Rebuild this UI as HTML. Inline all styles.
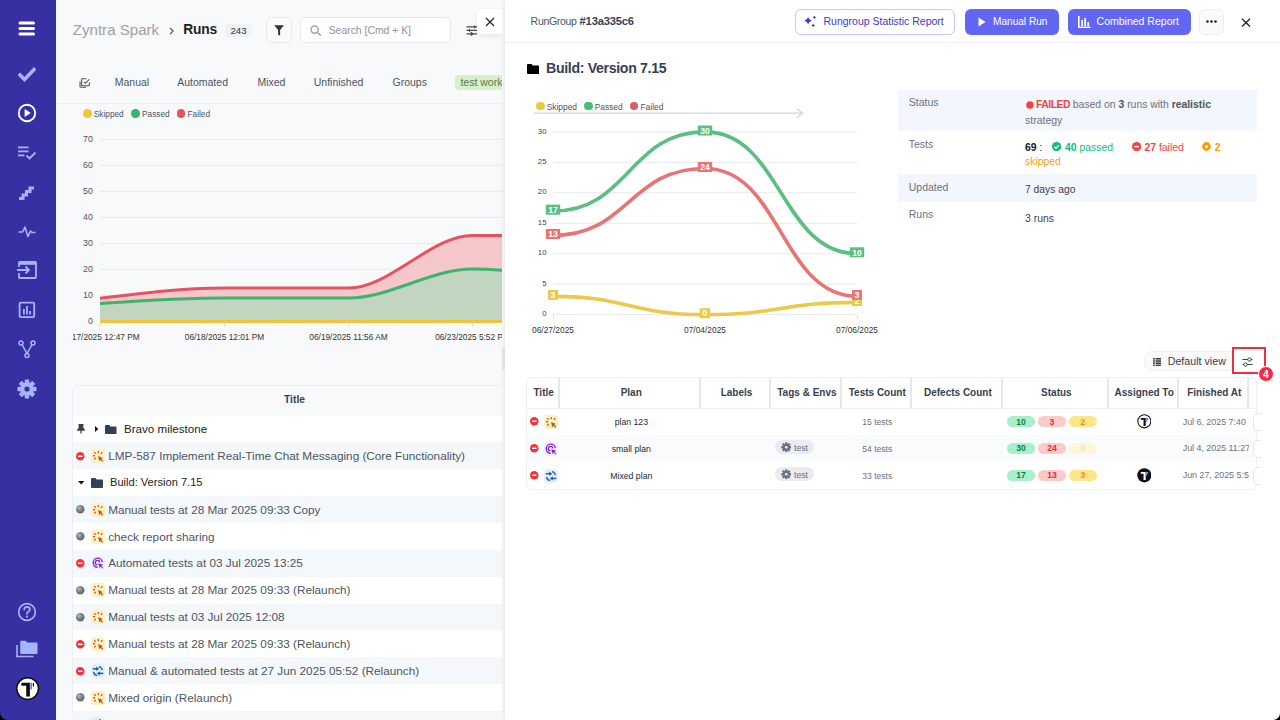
<!DOCTYPE html><html><head><meta charset="utf-8"><style>
html,body{margin:0;padding:0;}
body{width:1280px;height:720px;overflow:hidden;position:relative;background:#000;font-family:"Liberation Sans", sans-serif;}
.abs{position:absolute;}

</style></head><body>
<div style="position:absolute;left:0px;top:0px;width:56px;height:720px;background:#3730a3;border-bottom-left-radius:8px;"></div>
<svg style="position:absolute;left:18px;top:21px;" width="18" height="15" viewBox="0 0 18 15"><rect x="0.5" y="0.5" width="16.5" height="3" rx="1.5" fill="#fff"/><rect x="0.5" y="6" width="16.5" height="3" rx="1.5" fill="#fff"/><rect x="0.5" y="11.5" width="16.5" height="3" rx="1.5" fill="#fff"/></svg>
<svg style="position:absolute;left:18px;top:66px;" width="18" height="16" viewBox="0 0 18 16"><path d="M2 9 L6.5 13.5 L16 3.5" stroke="#a5b4fc" stroke-width="3.6" fill="none" stroke-linecap="square"/></svg>
<svg style="position:absolute;left:17px;top:103px;" width="20" height="20" viewBox="0 0 20 20"><circle cx="10" cy="10" r="8.2" stroke="#fff" stroke-width="1.9" fill="none"/><path d="M7.6 6 L13.8 10 L7.6 14 Z" fill="#fff"/></svg>
<svg style="position:absolute;left:17px;top:145px;" width="20" height="16" viewBox="0 0 20 16"><rect x="1" y="1.5" width="10.5" height="1.8" fill="#a5b4fc"/><rect x="1" y="5.5" width="10.5" height="1.8" fill="#a5b4fc"/><rect x="1" y="9.5" width="6.5" height="1.8" fill="#a5b4fc"/><path d="M9.5 10.5 L12.5 13.5 L18.5 7.5" stroke="#a5b4fc" stroke-width="1.8" fill="none"/></svg>
<svg style="position:absolute;left:17px;top:184px;" width="20" height="17" viewBox="0 0 20 17"><path d="M2 14.5 H6 V11 H9.5 V7.5 H13 V4 H17" stroke="#a5b4fc" stroke-width="3" fill="none" stroke-linejoin="miter"/></svg>
<svg style="position:absolute;left:17px;top:224px;" width="20" height="14" viewBox="0 0 20 14"><path d="M1.5 8 H5.5 L8 3 L11 12.5 L13.5 7 L15 8.5 H18.5" stroke="#a5b4fc" stroke-width="1.6" fill="none" stroke-linejoin="round"/></svg>
<svg style="position:absolute;left:16px;top:260px;" width="22" height="20" viewBox="0 0 22 20"><path d="M3 7 V2.5 Q3 1.8 3.7 1.8 H19.3 Q20 1.8 20 2.5 V17.3 Q20 18 19.3 18 H3.7 Q3 18 3 17.3 V13" stroke="#a5b4fc" stroke-width="1.8" fill="none"/><rect x="3" y="1.8" width="17" height="3" fill="#a5b4fc"/><path d="M1 10 H13 M9.5 6.5 L13 10 L9.5 13.5" stroke="#a5b4fc" stroke-width="1.8" fill="none"/></svg>
<svg style="position:absolute;left:18px;top:301px;" width="18" height="18" viewBox="0 0 18 18"><rect x="1.6" y="1.6" width="14.6" height="14.6" rx="1.2" stroke="#a5b4fc" stroke-width="1.8" fill="none"/><rect x="5" y="8" width="1.8" height="5.5" fill="#a5b4fc"/><rect x="8.1" y="5" width="1.8" height="8.5" fill="#a5b4fc"/><rect x="11.2" y="10" width="1.8" height="3.5" fill="#a5b4fc"/></svg>
<svg style="position:absolute;left:18px;top:340px;" width="18" height="19" viewBox="0 0 18 19"><circle cx="3" cy="3" r="2" stroke="#a5b4fc" stroke-width="1.5" fill="none"/><circle cx="15" cy="3" r="2" stroke="#a5b4fc" stroke-width="1.5" fill="none"/><circle cx="9" cy="15.5" r="2" stroke="#a5b4fc" stroke-width="1.5" fill="none"/><path d="M4 4.7 L9 13.5 L14 4.7" stroke="#a5b4fc" stroke-width="1.5" fill="none"/></svg>
<svg style="position:absolute;left:17px;top:379px;" width="20" height="20" viewBox="0 0 20 20"><rect x="7.8" y="0.5" width="4.4" height="5" rx="0.8" fill="#a5b4fc" transform="rotate(0 10 10)"/><rect x="7.8" y="0.5" width="4.4" height="5" rx="0.8" fill="#a5b4fc" transform="rotate(45 10 10)"/><rect x="7.8" y="0.5" width="4.4" height="5" rx="0.8" fill="#a5b4fc" transform="rotate(90 10 10)"/><rect x="7.8" y="0.5" width="4.4" height="5" rx="0.8" fill="#a5b4fc" transform="rotate(135 10 10)"/><rect x="7.8" y="0.5" width="4.4" height="5" rx="0.8" fill="#a5b4fc" transform="rotate(180 10 10)"/><rect x="7.8" y="0.5" width="4.4" height="5" rx="0.8" fill="#a5b4fc" transform="rotate(225 10 10)"/><rect x="7.8" y="0.5" width="4.4" height="5" rx="0.8" fill="#a5b4fc" transform="rotate(270 10 10)"/><rect x="7.8" y="0.5" width="4.4" height="5" rx="0.8" fill="#a5b4fc" transform="rotate(315 10 10)"/><circle cx="10" cy="10" r="6.8" fill="#a5b4fc"/><circle cx="10" cy="10" r="2.6" fill="#3730a3"/></svg>
<svg style="position:absolute;left:17px;top:602px;" width="20" height="20" viewBox="0 0 20 20"><circle cx="10" cy="10" r="8.3" stroke="#a5b4fc" stroke-width="1.7" fill="none"/><path d="M7.2 7.6 Q7.2 4.9 10 4.9 Q12.8 4.9 12.8 7.4 Q12.8 9 11.2 9.8 Q10 10.4 10 11.8" stroke="#a5b4fc" stroke-width="1.7" fill="none" stroke-linecap="round"/><circle cx="10" cy="14.6" r="1.1" fill="#a5b4fc"/></svg>
<svg style="position:absolute;left:15px;top:639px;" width="24" height="20" viewBox="0 0 24 20"><path d="M2 6 V17.5 H18.5" stroke="#a5b4fc" stroke-width="1.6" fill="none"/><path d="M5.2 2.5 Q5.2 1.8 5.9 1.8 H10.5 L12.3 3.6 H21.5 Q22.5 3.6 22.5 4.6 V14 Q22.5 15 21.5 15 H6.2 Q5.2 15 5.2 14 Z" fill="#a5b4fc"/></svg>
<svg style="position:absolute;left:15px;top:676px;" width="25" height="25" viewBox="0 0 25 25"><circle cx="12.6" cy="12.6" r="10.9" fill="#fff" stroke="#111" stroke-width="1.5"/><path d="M6.4 6.75 H14.9 V20.5 H11.2 V9.7 H6.4 Z" fill="#111"/><rect x="15.4" y="6.6" width="1.6" height="6.8" fill="#4f8cf7"/><rect x="17.8" y="7" width="1.2" height="3.5" fill="#111"/></svg>
<div style="position:absolute;left:56px;top:0px;width:449px;height:720px;background:#f8f9fb;"></div>
<div class="abs" style="left:56px;top:0;width:446px;height:720px;overflow:hidden;">
<div style="position:absolute;top:22.22px;font-size:15.1px;line-height:15.1px;color:#a0a0a0;font-weight:400;white-space:nowrap;left:16.75px;">Zyntra Spark</div>
<svg style="position:absolute;left:113px;top:27px;" width="6" height="8" viewBox="0 0 6 8"><path d="M1 1 L4.2 4 L1 7" stroke="#555" stroke-width="1.1" fill="none"/></svg>
<div style="position:absolute;top:23.32px;font-size:13.8px;line-height:13.8px;color:#1f1f1f;font-weight:700;white-space:nowrap;letter-spacing:-0.2px;left:127.20px;">Runs</div>
<div style="position:absolute;left:169px;top:23.5px;width:27px;height:13.5px;background:#f0f1f3;border-radius:4px;"></div>
<div style="position:absolute;top:26.07px;font-size:9.6px;line-height:9.6px;color:#333;font-weight:400;white-space:nowrap;left:-17.50px;width:400px;text-align:center;">243</div>
<div style="position:absolute;left:210px;top:17px;width:26px;height:26px;background:#fafafa;border:1px solid #e9e9ea;border-radius:6px;box-sizing:border-box;"></div>
<svg style="position:absolute;left:218px;top:25px;" width="11" height="11" viewBox="0 0 11 11"><path d="M0.2 0.3 H9.9 L6.1 5 V10.7 L4.1 9.4 V5 Z" fill="#333"/></svg>
<div style="position:absolute;left:244.3px;top:17.4px;width:150.4px;height:25.8px;background:#fff;border:1px solid #e7e9ee;border-radius:6px;box-sizing:border-box;"></div>
<svg style="position:absolute;left:254px;top:25px;" width="12" height="11" viewBox="0 0 12 11"><circle cx="4.6" cy="4.6" r="3.6" stroke="#9ca3af" stroke-width="1.4" fill="none"/><path d="M7.3 7.3 L10.8 10.6" stroke="#9ca3af" stroke-width="1.5"/></svg>
<div style="position:absolute;top:26.20px;font-size:10.4px;line-height:10.4px;color:#8e939b;font-weight:400;white-space:nowrap;left:272.70px;">Search [Cmd + K]</div>
<svg style="position:absolute;left:410px;top:25px;" width="12" height="11" viewBox="0 0 12 11"><path d="M0.5 1.9 H11 M0.5 5.4 H11 M0.5 8.9 H11" stroke="#4a4a4a" stroke-width="1.3"/><path d="M8 0 L10 1.9 L8 3.8 Z" fill="#4a4a4a"/><path d="M4 3.5 L2 5.4 L4 7.3 Z" fill="#4a4a4a"/><path d="M5.2 7 L7.4 8.9 L5.2 10.8 Z M5.2 7 V10.8" fill="#4a4a4a" stroke="#4a4a4a" stroke-width="0.6"/></svg>
<div style="position:absolute;left:421px;top:9.3px;width:26px;height:25px;background:#fff;border-radius:6px 0 0 6px;box-shadow:0 2px 5px rgba(0,0,0,0.08);"></div>
<svg style="position:absolute;left:428.5px;top:16.8px;" width="10" height="10" viewBox="0 0 10 10"><path d="M1 1 L9 9 M9 1 L1 9" stroke="#222" stroke-width="1.15"/></svg>
<svg style="position:absolute;left:22.5px;top:77.5px;" width="12" height="11" viewBox="0 0 12 11"><path d="M7.5 0.8 H3.5 Q2.6 0.8 2.6 1.7 V6.9 Q2.6 7.8 3.5 7.8 H9.6 Q10.4 7.8 10.4 6.9 V4.6" stroke="#555" stroke-width="1.1" fill="none"/><path d="M4.9 3.8 L6.5 5.3 L10.2 1.4" stroke="#555" stroke-width="1.1" fill="none"/><path d="M1 3.6 V8.4 Q1 9.3 1.9 9.3 H7.2" stroke="#555" stroke-width="1.1" fill="none"/></svg>
<div style="position:absolute;top:77.11px;font-size:10.5px;line-height:10.5px;color:#4b5563;font-weight:400;white-space:nowrap;left:58.75px;">Manual</div>
<div style="position:absolute;top:77.11px;font-size:10.5px;line-height:10.5px;color:#4b5563;font-weight:400;white-space:nowrap;left:121.20px;">Automated</div>
<div style="position:absolute;top:77.11px;font-size:10.5px;line-height:10.5px;color:#4b5563;font-weight:400;white-space:nowrap;left:201.40px;">Mixed</div>
<div style="position:absolute;top:77.11px;font-size:10.5px;line-height:10.5px;color:#4b5563;font-weight:400;white-space:nowrap;left:257.75px;">Unfinished</div>
<div style="position:absolute;top:77.11px;font-size:10.5px;line-height:10.5px;color:#4b5563;font-weight:400;white-space:nowrap;left:336.50px;">Groups</div>
<div style="position:absolute;left:398.75px;top:75px;width:60px;height:14.6px;background:#d9efc6;border-radius:4px;"></div>
<div style="position:absolute;top:77.11px;font-size:10.5px;line-height:10.5px;color:#5b7a52;font-weight:400;white-space:nowrap;left:404.40px;">test work</div>
<div style="position:absolute;left:0px;top:102.5px;width:446px;height:1px;background:#eceef2;"></div>
<div style="position:absolute;left:27px;top:109px;width:8.5px;height:8.5px;background:#f0c53c;border-radius:50%;"></div>
<div style="position:absolute;top:110.17px;font-size:8.3px;line-height:8.3px;color:#4b5563;font-weight:400;white-space:nowrap;left:37.75px;">Skipped</div>
<div style="position:absolute;left:75px;top:109px;width:8.5px;height:8.5px;background:#3cb46e;border-radius:50%;"></div>
<div style="position:absolute;top:110.17px;font-size:8.3px;line-height:8.3px;color:#4b5563;font-weight:400;white-space:nowrap;left:86.00px;">Passed</div>
<div style="position:absolute;left:120.6px;top:109px;width:8.5px;height:8.5px;background:#e25560;border-radius:50%;"></div>
<div style="position:absolute;top:110.17px;font-size:8.3px;line-height:8.3px;color:#4b5563;font-weight:400;white-space:nowrap;left:131.50px;">Failed</div>
<div class="abs" style="left:16.5px;top:125px;width:429.5px;height:220px;overflow:hidden;"><svg width="446" height="345" style="position:absolute;left:-16.5px;top:-125px;" font-family="Liberation Sans"><text x="36.8" y="323.70" text-anchor="end" font-size="8.8" fill="#555">0</text><rect x="44" y="294.90" width="420" height="1" fill="#e6e8eb"/><text x="36.8" y="297.70" text-anchor="end" font-size="8.8" fill="#555">10</text><rect x="44" y="268.90" width="420" height="1" fill="#e6e8eb"/><text x="36.8" y="271.70" text-anchor="end" font-size="8.8" fill="#555">20</text><rect x="44" y="242.90" width="420" height="1" fill="#e6e8eb"/><text x="36.8" y="245.70" text-anchor="end" font-size="8.8" fill="#555">30</text><rect x="44" y="216.90" width="420" height="1" fill="#e6e8eb"/><text x="36.8" y="219.70" text-anchor="end" font-size="8.8" fill="#555">40</text><rect x="44" y="190.90" width="420" height="1" fill="#e6e8eb"/><text x="36.8" y="193.70" text-anchor="end" font-size="8.8" fill="#555">50</text><rect x="44" y="164.90" width="420" height="1" fill="#e6e8eb"/><text x="36.8" y="167.70" text-anchor="end" font-size="8.8" fill="#555">60</text><rect x="44" y="138.90" width="420" height="1" fill="#e6e8eb"/><text x="36.8" y="141.70" text-anchor="end" font-size="8.8" fill="#555">70</text><path d="M44.00,298.30 C85.50,293.15 127.00,288.00 168.50,288.00 C209.83,288.00 251.17,288.00 292.50,288.00 C333.83,288.00 375.17,235.50 416.50,235.50 C457.83,235.50 499.17,235.50 540.50,235.50 L540.5,321.4 L44,321.4 Z" fill="#f5c7ca"/><path d="M44.00,303.40 C85.50,300.70 127.00,298.00 168.50,298.00 C209.83,298.00 251.17,298.00 292.50,298.00 C333.83,298.00 375.17,269.00 416.50,269.00 C457.83,269.00 499.17,277.00 540.50,285.00 L540.5,321.4 L44,321.4 Z" fill="#c1d5c0"/><path d="M44.00,298.30 C85.50,293.15 127.00,288.00 168.50,288.00 C209.83,288.00 251.17,288.00 292.50,288.00 C333.83,288.00 375.17,235.50 416.50,235.50 C457.83,235.50 499.17,235.50 540.50,235.50" stroke="#e25560" stroke-width="3" fill="none"/><path d="M44.00,303.40 C85.50,300.70 127.00,298.00 168.50,298.00 C209.83,298.00 251.17,298.00 292.50,298.00 C333.83,298.00 375.17,269.00 416.50,269.00 C457.83,269.00 499.17,277.00 540.50,285.00" stroke="#3cb46e" stroke-width="3" fill="none"/><rect x="44" y="320" width="420" height="3" fill="#f0c53c"/><rect x="43.5" y="323.5" width="1" height="3" fill="#d5d7db"/><rect x="168.0" y="323.5" width="1" height="3" fill="#d5d7db"/><rect x="292.0" y="323.5" width="1" height="3" fill="#d5d7db"/><rect x="416.0" y="323.5" width="1" height="3" fill="#d5d7db"/><text x="44" y="339.8" text-anchor="middle" font-size="8.3" fill="#333">06/17/2025 12:47 PM</text><text x="168.5" y="339.8" text-anchor="middle" font-size="8.3" fill="#333">06/18/2025 12:01 PM</text><text x="292.5" y="339.8" text-anchor="middle" font-size="8.3" fill="#333">06/19/2025 11:56 AM</text><text x="416.5" y="339.8" text-anchor="middle" font-size="8.3" fill="#333">06/23/2025 5:52 PM</text></svg></div>
<div style="position:absolute;left:16.200000000000003px;top:384.6px;width:500px;height:335.4px;background:#f8f9fb;border:1px solid #eceef1;border-radius:6px;box-sizing:border-box;"></div>
<div style="position:absolute;top:394.58px;font-size:10.3px;line-height:10.3px;color:#374151;font-weight:700;white-space:nowrap;left:38.50px;width:400px;text-align:center;">Title</div>
<div style="position:absolute;left:16.200000000000003px;top:415.5px;width:500px;height:1px;background:#eceef1;"></div>
<div style="position:absolute;left:17.200000000000003px;top:415.60px;width:500px;height:27px;background:#ffffff;"></div>
<svg style="position:absolute;left:21px;top:424.1px;" width="8" height="10" viewBox="0 0 8 10"><path d="M1.5 0.5 H6.5 M2.3 0.5 V4 L0.8 6 H7.2 L5.7 4 V0.5 M4 6 V9.5" stroke="#374151" stroke-width="1.3" fill="#374151"/></svg>
<svg style="position:absolute;left:38.599999999999994px;top:426.1px;" width="4" height="6" viewBox="0 0 4 6"><path d="M0 0 L3.4 3 L0 6 Z" fill="#111"/></svg>
<svg style="position:absolute;left:49.099999999999994px;top:424.6px;" width="11.5" height="9.2" viewBox="0 0 11.5 9.2"><path d="M0 1 Q0 0 1 0 H4.3 L5.4 1.4 H10.5 Q11.5 1.4 11.5 2.4 V8.2 Q11.5 9.2 10.5 9.2 H1 Q0 9.2 0 8.2 Z" fill="#334155"/></svg>
<div style="position:absolute;top:422.78px;font-size:11.6px;line-height:11.6px;color:#222;font-weight:400;white-space:nowrap;left:68.00px;">Bravo milestone</div>
<div style="position:absolute;left:17.200000000000003px;top:442.45px;width:500px;height:27px;background:#f5f8fa;"></div>
<svg style="position:absolute;left:20.400000000000006px;top:451.70000000000005px;" width="9" height="9" viewBox="0 0 9 9"><circle cx="4.25" cy="4.25" r="4.25" fill="#ef3340"/><rect x="2" y="3.6" width="4.5" height="1.4" fill="#fff"/></svg>
<svg style="position:absolute;left:35.3px;top:448.95000000000005px;" width="14" height="14" viewBox="0 0 14 14"><rect x="0" y="0" width="14" height="14" rx="4" fill="#fdf0c4"/><g fill="#c2570c"><rect x="6.7" y="2" width="1.3" height="2.2" rx="0.6"/><rect x="3.3" y="2.8" width="1.3" height="2.2" rx="0.6" transform="rotate(-40 4 3.9)"/><rect x="10" y="2.8" width="1.3" height="2.2" rx="0.6" transform="rotate(40 10.6 3.9)"/><rect x="2" y="6.1" width="2.2" height="1.3" rx="0.6"/><rect x="3.3" y="8.6" width="1.3" height="2.2" rx="0.6" transform="rotate(40 4 9.7)"/><path d="M7 7 L12 9 L10.2 9.8 L12.3 11.9 L11.4 12.8 L9.3 10.7 L8.5 12.5 Z"/></g></svg>
<div style="position:absolute;top:450.00px;font-size:11.75px;line-height:11.75px;color:#4b5563;font-weight:400;white-space:nowrap;left:52.20px;">LMP-587 Implement Real-Time Chat Messaging (Core Functionality)</div>
<div style="position:absolute;left:17.200000000000003px;top:469.30px;width:500px;height:27px;background:#ffffff;"></div>
<svg style="position:absolute;left:22.299999999999997px;top:480.8px;" width="7" height="4" viewBox="0 0 7 4"><path d="M0 0 H6.4 L3.2 3.6 Z" fill="#111"/></svg>
<svg style="position:absolute;left:35px;top:477.8px;" width="12" height="10" viewBox="0 0 12 10"><path d="M0 1 Q0 0 1 0 H4.3 L5.6 1.5 H11 Q12 1.5 12 2.5 V9 Q12 10 11 10 H1 Q0 10 0 9 Z" fill="#334155"/></svg>
<div style="position:absolute;top:476.90px;font-size:11.1px;line-height:11.1px;color:#222;font-weight:400;white-space:nowrap;left:54.00px;">Build: Version 7.15</div>
<div style="position:absolute;left:17.200000000000003px;top:496.15px;width:500px;height:27px;background:#f5f8fa;"></div>
<svg style="position:absolute;left:20.400000000000006px;top:505.40000000000003px;" width="9" height="9" viewBox="0 0 9 9"><defs><radialGradient id="gs3" cx="0.38" cy="0.35" r="0.7"><stop offset="0" stop-color="#b4b8bf"/><stop offset="0.5" stop-color="#7b8088"/><stop offset="1" stop-color="#5d6168"/></radialGradient></defs><circle cx="4.25" cy="4.25" r="4.25" fill="url(#gs3)"/></svg>
<svg style="position:absolute;left:35.3px;top:502.65000000000003px;" width="14" height="14" viewBox="0 0 14 14"><rect x="0" y="0" width="14" height="14" rx="4" fill="#fdf0c4"/><g fill="#c2570c"><rect x="6.7" y="2" width="1.3" height="2.2" rx="0.6"/><rect x="3.3" y="2.8" width="1.3" height="2.2" rx="0.6" transform="rotate(-40 4 3.9)"/><rect x="10" y="2.8" width="1.3" height="2.2" rx="0.6" transform="rotate(40 10.6 3.9)"/><rect x="2" y="6.1" width="2.2" height="1.3" rx="0.6"/><rect x="3.3" y="8.6" width="1.3" height="2.2" rx="0.6" transform="rotate(40 4 9.7)"/><path d="M7 7 L12 9 L10.2 9.8 L12.3 11.9 L11.4 12.8 L9.3 10.7 L8.5 12.5 Z"/></g></svg>
<div style="position:absolute;top:503.70px;font-size:11.75px;line-height:11.75px;color:#4b5563;font-weight:400;white-space:nowrap;left:52.20px;">Manual tests at 28 Mar 2025 09:33 Copy</div>
<div style="position:absolute;left:17.200000000000003px;top:523.00px;width:500px;height:27px;background:#ffffff;"></div>
<svg style="position:absolute;left:20.400000000000006px;top:532.25px;" width="9" height="9" viewBox="0 0 9 9"><defs><radialGradient id="gs4" cx="0.38" cy="0.35" r="0.7"><stop offset="0" stop-color="#b4b8bf"/><stop offset="0.5" stop-color="#7b8088"/><stop offset="1" stop-color="#5d6168"/></radialGradient></defs><circle cx="4.25" cy="4.25" r="4.25" fill="url(#gs4)"/></svg>
<svg style="position:absolute;left:35.3px;top:529.5px;" width="14" height="14" viewBox="0 0 14 14"><rect x="0" y="0" width="14" height="14" rx="4" fill="#fdf0c4"/><g fill="#c2570c"><rect x="6.7" y="2" width="1.3" height="2.2" rx="0.6"/><rect x="3.3" y="2.8" width="1.3" height="2.2" rx="0.6" transform="rotate(-40 4 3.9)"/><rect x="10" y="2.8" width="1.3" height="2.2" rx="0.6" transform="rotate(40 10.6 3.9)"/><rect x="2" y="6.1" width="2.2" height="1.3" rx="0.6"/><rect x="3.3" y="8.6" width="1.3" height="2.2" rx="0.6" transform="rotate(40 4 9.7)"/><path d="M7 7 L12 9 L10.2 9.8 L12.3 11.9 L11.4 12.8 L9.3 10.7 L8.5 12.5 Z"/></g></svg>
<div style="position:absolute;top:530.55px;font-size:11.75px;line-height:11.75px;color:#4b5563;font-weight:400;white-space:nowrap;left:52.20px;">check report sharing</div>
<div style="position:absolute;left:17.200000000000003px;top:549.85px;width:500px;height:27px;background:#f5f8fa;"></div>
<svg style="position:absolute;left:20.400000000000006px;top:559.1px;" width="9" height="9" viewBox="0 0 9 9"><circle cx="4.25" cy="4.25" r="4.25" fill="#ef3340"/><rect x="2" y="3.6" width="4.5" height="1.4" fill="#fff"/></svg>
<svg style="position:absolute;left:35.3px;top:556.35px;" width="14" height="14" viewBox="0 0 14 14"><rect x="0" y="0" width="14" height="14" rx="4" fill="#f3eefe"/><path d="M11.4 6.2 A4.6 4.6 0 1 0 6.6 11.4" stroke="#7e22ce" stroke-width="1.3" fill="none"/><path d="M8.9 6.4 A2.3 2.3 0 1 0 6.4 8.9" stroke="#7e22ce" stroke-width="1.3" fill="none"/><path d="M7.2 7.2 L12.2 8.8 L10.3 9.8 L12.4 11.9 L11.7 12.6 L9.6 10.5 L8.8 12.3 Z" fill="#6d28d9"/></svg>
<div style="position:absolute;top:557.40px;font-size:11.75px;line-height:11.75px;color:#4b5563;font-weight:400;white-space:nowrap;left:52.20px;">Automated tests at 03 Jul 2025 13:25</div>
<div style="position:absolute;left:17.200000000000003px;top:576.70px;width:500px;height:27px;background:#ffffff;"></div>
<svg style="position:absolute;left:20.400000000000006px;top:585.95px;" width="9" height="9" viewBox="0 0 9 9"><defs><radialGradient id="gs6" cx="0.38" cy="0.35" r="0.7"><stop offset="0" stop-color="#b4b8bf"/><stop offset="0.5" stop-color="#7b8088"/><stop offset="1" stop-color="#5d6168"/></radialGradient></defs><circle cx="4.25" cy="4.25" r="4.25" fill="url(#gs6)"/></svg>
<svg style="position:absolute;left:35.3px;top:583.2px;" width="14" height="14" viewBox="0 0 14 14"><rect x="0" y="0" width="14" height="14" rx="4" fill="#fdf0c4"/><g fill="#c2570c"><rect x="6.7" y="2" width="1.3" height="2.2" rx="0.6"/><rect x="3.3" y="2.8" width="1.3" height="2.2" rx="0.6" transform="rotate(-40 4 3.9)"/><rect x="10" y="2.8" width="1.3" height="2.2" rx="0.6" transform="rotate(40 10.6 3.9)"/><rect x="2" y="6.1" width="2.2" height="1.3" rx="0.6"/><rect x="3.3" y="8.6" width="1.3" height="2.2" rx="0.6" transform="rotate(40 4 9.7)"/><path d="M7 7 L12 9 L10.2 9.8 L12.3 11.9 L11.4 12.8 L9.3 10.7 L8.5 12.5 Z"/></g></svg>
<div style="position:absolute;top:584.25px;font-size:11.75px;line-height:11.75px;color:#4b5563;font-weight:400;white-space:nowrap;left:52.20px;">Manual tests at 28 Mar 2025 09:33 (Relaunch)</div>
<div style="position:absolute;left:17.200000000000003px;top:603.55px;width:500px;height:27px;background:#f5f8fa;"></div>
<svg style="position:absolute;left:20.400000000000006px;top:612.8000000000001px;" width="9" height="9" viewBox="0 0 9 9"><defs><radialGradient id="gs7" cx="0.38" cy="0.35" r="0.7"><stop offset="0" stop-color="#b4b8bf"/><stop offset="0.5" stop-color="#7b8088"/><stop offset="1" stop-color="#5d6168"/></radialGradient></defs><circle cx="4.25" cy="4.25" r="4.25" fill="url(#gs7)"/></svg>
<svg style="position:absolute;left:35.3px;top:610.0500000000001px;" width="14" height="14" viewBox="0 0 14 14"><rect x="0" y="0" width="14" height="14" rx="4" fill="#fdf0c4"/><g fill="#c2570c"><rect x="6.7" y="2" width="1.3" height="2.2" rx="0.6"/><rect x="3.3" y="2.8" width="1.3" height="2.2" rx="0.6" transform="rotate(-40 4 3.9)"/><rect x="10" y="2.8" width="1.3" height="2.2" rx="0.6" transform="rotate(40 10.6 3.9)"/><rect x="2" y="6.1" width="2.2" height="1.3" rx="0.6"/><rect x="3.3" y="8.6" width="1.3" height="2.2" rx="0.6" transform="rotate(40 4 9.7)"/><path d="M7 7 L12 9 L10.2 9.8 L12.3 11.9 L11.4 12.8 L9.3 10.7 L8.5 12.5 Z"/></g></svg>
<div style="position:absolute;top:611.10px;font-size:11.75px;line-height:11.75px;color:#4b5563;font-weight:400;white-space:nowrap;left:52.20px;">Manual tests at 03 Jul 2025 12:08</div>
<div style="position:absolute;left:17.200000000000003px;top:630.40px;width:500px;height:27px;background:#ffffff;"></div>
<svg style="position:absolute;left:20.400000000000006px;top:639.6500000000001px;" width="9" height="9" viewBox="0 0 9 9"><circle cx="4.25" cy="4.25" r="4.25" fill="#ef3340"/><rect x="2" y="3.6" width="4.5" height="1.4" fill="#fff"/></svg>
<svg style="position:absolute;left:35.3px;top:636.9000000000001px;" width="14" height="14" viewBox="0 0 14 14"><rect x="0" y="0" width="14" height="14" rx="4" fill="#fdf0c4"/><g fill="#c2570c"><rect x="6.7" y="2" width="1.3" height="2.2" rx="0.6"/><rect x="3.3" y="2.8" width="1.3" height="2.2" rx="0.6" transform="rotate(-40 4 3.9)"/><rect x="10" y="2.8" width="1.3" height="2.2" rx="0.6" transform="rotate(40 10.6 3.9)"/><rect x="2" y="6.1" width="2.2" height="1.3" rx="0.6"/><rect x="3.3" y="8.6" width="1.3" height="2.2" rx="0.6" transform="rotate(40 4 9.7)"/><path d="M7 7 L12 9 L10.2 9.8 L12.3 11.9 L11.4 12.8 L9.3 10.7 L8.5 12.5 Z"/></g></svg>
<div style="position:absolute;top:637.95px;font-size:11.75px;line-height:11.75px;color:#4b5563;font-weight:400;white-space:nowrap;left:52.20px;">Manual tests at 28 Mar 2025 09:33 (Relaunch)</div>
<div style="position:absolute;left:17.200000000000003px;top:657.25px;width:500px;height:27px;background:#f5f8fa;"></div>
<svg style="position:absolute;left:20.400000000000006px;top:666.5px;" width="9" height="9" viewBox="0 0 9 9"><circle cx="4.25" cy="4.25" r="4.25" fill="#ef3340"/><rect x="2" y="3.6" width="4.5" height="1.4" fill="#fff"/></svg>
<svg style="position:absolute;left:35.3px;top:663.75px;" width="14" height="14" viewBox="0 0 14 14"><rect x="0" y="0" width="14" height="14" rx="4" fill="#e3effc"/><path d="M1.8 4.8 H6" stroke="#1e5fa8" stroke-width="1.5"/><path d="M5.2 2.6 L8.2 4.8 L5.2 7 Z" fill="#1e5fa8"/><path d="M8 2.6 A4.8 4.8 0 0 1 11.5 6.2" stroke="#1e5fa8" stroke-width="1.4" fill="none"/><path d="M12.3 9.4 H8" stroke="#1e5fa8" stroke-width="1.5"/><path d="M8.8 7.2 L5.8 9.4 L8.8 11.6 Z" fill="#1e5fa8"/><path d="M6.2 11.6 A4.8 4.8 0 0 1 2.5 7.8" stroke="#1e5fa8" stroke-width="1.4" fill="none"/></svg>
<div style="position:absolute;top:664.80px;font-size:11.75px;line-height:11.75px;color:#4b5563;font-weight:400;white-space:nowrap;left:52.20px;">Manual &amp; automated tests at 27 Jun 2025 05:52 (Relaunch)</div>
<div style="position:absolute;left:17.200000000000003px;top:684.10px;width:500px;height:27px;background:#ffffff;"></div>
<svg style="position:absolute;left:20.400000000000006px;top:693.35px;" width="9" height="9" viewBox="0 0 9 9"><defs><radialGradient id="gs10" cx="0.38" cy="0.35" r="0.7"><stop offset="0" stop-color="#b4b8bf"/><stop offset="0.5" stop-color="#7b8088"/><stop offset="1" stop-color="#5d6168"/></radialGradient></defs><circle cx="4.25" cy="4.25" r="4.25" fill="url(#gs10)"/></svg>
<svg style="position:absolute;left:35.3px;top:690.6px;" width="14" height="14" viewBox="0 0 14 14"><rect x="0" y="0" width="14" height="14" rx="4" fill="#fdf0c4"/><g fill="#c2570c"><rect x="6.7" y="2" width="1.3" height="2.2" rx="0.6"/><rect x="3.3" y="2.8" width="1.3" height="2.2" rx="0.6" transform="rotate(-40 4 3.9)"/><rect x="10" y="2.8" width="1.3" height="2.2" rx="0.6" transform="rotate(40 10.6 3.9)"/><rect x="2" y="6.1" width="2.2" height="1.3" rx="0.6"/><rect x="3.3" y="8.6" width="1.3" height="2.2" rx="0.6" transform="rotate(40 4 9.7)"/><path d="M7 7 L12 9 L10.2 9.8 L12.3 11.9 L11.4 12.8 L9.3 10.7 L8.5 12.5 Z"/></g></svg>
<div style="position:absolute;top:691.65px;font-size:11.75px;line-height:11.75px;color:#4b5563;font-weight:400;white-space:nowrap;left:52.20px;">Mixed origin (Relaunch)</div>
<div style="position:absolute;left:17.200000000000003px;top:710.95px;width:500px;height:27px;background:#f5f8fa;"></div>
<svg style="position:absolute;left:20.400000000000006px;top:720.2px;" width="9" height="9" viewBox="0 0 9 9"><defs><radialGradient id="gs11" cx="0.38" cy="0.35" r="0.7"><stop offset="0" stop-color="#b4b8bf"/><stop offset="0.5" stop-color="#7b8088"/><stop offset="1" stop-color="#5d6168"/></radialGradient></defs><circle cx="4.25" cy="4.25" r="4.25" fill="url(#gs11)"/></svg>
<svg style="position:absolute;left:35.3px;top:717.45px;" width="14" height="14" viewBox="0 0 14 14"><rect x="0" y="0" width="14" height="14" rx="4" fill="#e3effc"/><path d="M1.8 4.8 H6" stroke="#1e5fa8" stroke-width="1.5"/><path d="M5.2 2.6 L8.2 4.8 L5.2 7 Z" fill="#1e5fa8"/><path d="M8 2.6 A4.8 4.8 0 0 1 11.5 6.2" stroke="#1e5fa8" stroke-width="1.4" fill="none"/><path d="M12.3 9.4 H8" stroke="#1e5fa8" stroke-width="1.5"/><path d="M8.8 7.2 L5.8 9.4 L8.8 11.6 Z" fill="#1e5fa8"/><path d="M6.2 11.6 A4.8 4.8 0 0 1 2.5 7.8" stroke="#1e5fa8" stroke-width="1.4" fill="none"/></svg>
</div>
<div style="position:absolute;left:502px;top:0px;width:3px;height:720px;background:linear-gradient(90deg,#f6f7f9,#f1f2f4);"></div>
<div style="position:absolute;left:502px;top:347.5px;width:3px;height:22px;background:#e3e5e9;border-radius:2px;"></div>
<div style="position:absolute;left:505px;top:0px;width:775px;height:720px;background:#fff;box-shadow:-2px 0 4px rgba(0,0,0,0.03);border-bottom-right-radius:7px;"></div>
<div style="position:absolute;top:16.21px;font-size:10.5px;line-height:10.5px;color:#4b5563;font-weight:400;white-space:nowrap;letter-spacing:-0.3px;left:530.60px;">RunGroup</div>
<div style="position:absolute;top:15.62px;font-size:11.2px;line-height:11.2px;color:#374151;font-weight:700;white-space:nowrap;letter-spacing:-0.2px;left:579.60px;">#13a335c6</div>
<div style="position:absolute;left:505px;top:42px;width:775px;height:1px;background:#f1f2f5;"></div>
<div style="position:absolute;left:794.6px;top:9px;width:160.7px;height:25.7px;border:1px solid #c3cbfb;border-radius:6px;box-sizing:border-box;background:#fff;"></div>
<svg style="position:absolute;left:803.5px;top:14px;" width="14" height="15" viewBox="0 0 14 15"><path d="M4.1 3.0 Q4.766 6.034 7.8 6.7 Q4.766 7.3660000000000005 4.1 10.4 Q3.4339999999999997 7.3660000000000005 0.39999999999999947 6.7 Q3.4339999999999997 6.034 4.1 3.0 Z" fill="#4338ca"/><path d="M10.4 1.4 Q10.742 2.9579999999999997 12.3 3.3 Q10.742 3.642 10.4 5.199999999999999 Q10.058 3.642 8.5 3.3 Q10.058 2.9579999999999997 10.4 1.4 Z" fill="#4338ca"/><path d="M9.2 9.5 Q9.542 11.058 11.1 11.4 Q9.542 11.742 9.2 13.3 Q8.857999999999999 11.742 7.299999999999999 11.4 Q8.857999999999999 11.058 9.2 9.5 Z" fill="#4338ca"/></svg>
<div style="position:absolute;top:16.41px;font-size:10.5px;line-height:10.5px;color:#4338ca;font-weight:400;white-space:nowrap;left:823.50px;">Rungroup Statistic Report</div>
<div style="position:absolute;left:964.5px;top:9px;width:94.5px;height:25.7px;background:#6366f1;border-radius:6px;"></div>
<svg style="position:absolute;left:977.5px;top:17px;" width="8" height="10" viewBox="0 0 8 10"><path d="M0.5 0.5 L7.5 5 L0.5 9.5 Z" fill="#fff"/></svg>
<div style="position:absolute;top:16.75px;font-size:10.1px;line-height:10.1px;color:#fff;font-weight:400;white-space:nowrap;left:993.00px;">Manual Run</div>
<div style="position:absolute;left:1068px;top:9px;width:122.6px;height:25.7px;background:#6366f1;border-radius:6px;"></div>
<svg style="position:absolute;left:1077.5px;top:16px;" width="13" height="12" viewBox="0 0 13 12"><path d="M0.8 0 V11.2 H12.5" stroke="#fff" stroke-width="1.6" fill="none"/><rect x="3.3" y="4" width="1.7" height="6" fill="#fff"/><rect x="6.3" y="2" width="1.7" height="8" fill="#fff"/><rect x="9.3" y="6" width="1.7" height="4" fill="#fff"/></svg>
<div style="position:absolute;top:16.41px;font-size:10.5px;line-height:10.5px;color:#fff;font-weight:400;white-space:nowrap;left:1096.60px;">Combined Report</div>
<div style="position:absolute;left:1199px;top:9px;width:25px;height:25.7px;background:#fafafa;border:1px solid #eceef1;border-radius:6px;box-sizing:border-box;"></div>
<svg style="position:absolute;left:1206px;top:20px;" width="11" height="3" viewBox="0 0 11 3"><circle cx="1.5" cy="1.5" r="1.3" fill="#222"/><circle cx="5.5" cy="1.5" r="1.3" fill="#222"/><circle cx="9.5" cy="1.5" r="1.3" fill="#222"/></svg>
<svg style="position:absolute;left:1240.5px;top:17.5px;" width="10" height="9" viewBox="0 0 10 9"><path d="M1 0.8 L9 8.5 M9 0.8 L1 8.5" stroke="#222" stroke-width="1.3"/></svg>
<svg style="position:absolute;left:526.7px;top:63.5px;" width="12.5" height="10" viewBox="0 0 12.5 10"><path d="M0 1 Q0 0 1 0 H4.5 L6 1.6 H11.5 Q12.5 1.6 12.5 2.6 V9 Q12.5 10 11.5 10 H1 Q0 10 0 9 Z" fill="#000"/></svg>
<div style="position:absolute;top:60.98px;font-size:14.2px;line-height:14.2px;color:#334155;font-weight:700;white-space:nowrap;letter-spacing:-0.35px;left:546.00px;">Build: Version 7.15</div>
<div style="position:absolute;left:536px;top:101.5px;width:8.7px;height:8.7px;background:#ecc94b;border-radius:50%;"></div>
<div style="position:absolute;top:103.09px;font-size:8.4px;line-height:8.4px;color:#4b5563;font-weight:400;white-space:nowrap;left:546.70px;">Skipped</div>
<div style="position:absolute;left:584px;top:101.5px;width:8.7px;height:8.7px;background:#48bb78;border-radius:50%;"></div>
<div style="position:absolute;top:103.09px;font-size:8.4px;line-height:8.4px;color:#4b5563;font-weight:400;white-space:nowrap;left:594.70px;">Passed</div>
<div style="position:absolute;left:629.8px;top:101.5px;width:8.7px;height:8.7px;background:#e25a60;border-radius:50%;"></div>
<div style="position:absolute;top:103.09px;font-size:8.4px;line-height:8.4px;color:#4b5563;font-weight:400;white-space:nowrap;left:640.50px;">Failed</div>
<svg style="position:absolute;left:533px;top:107px;" width="272" height="13" viewBox="0 0 272 13"><path d="M1 6.2 H269.5" stroke="#d1d5e0" stroke-width="1.2"/><path d="M263.5 1.5 L269.5 6.2 L263.5 11" stroke="#d1d5e0" stroke-width="1.2" fill="none"/></svg>
<svg class="abs" style="left:0;top:0;" width="1280" height="720" font-family="Liberation Sans"><rect x="553.3" y="314.10" width="303.7" height="1" fill="#e8e9ec"/><text x="546.5" y="316.20" text-anchor="end" font-size="7.8" fill="#444">0</text><rect x="553.3" y="283.65" width="303.7" height="1" fill="#e8e9ec"/><text x="546.5" y="285.75" text-anchor="end" font-size="7.8" fill="#444">5</text><rect x="553.3" y="253.20" width="303.7" height="1" fill="#e8e9ec"/><text x="546.5" y="255.30" text-anchor="end" font-size="7.8" fill="#444">10</text><rect x="553.3" y="222.75" width="303.7" height="1" fill="#e8e9ec"/><text x="546.5" y="224.85" text-anchor="end" font-size="7.8" fill="#444">15</text><rect x="553.3" y="192.30" width="303.7" height="1" fill="#e8e9ec"/><text x="546.5" y="194.40" text-anchor="end" font-size="7.8" fill="#444">20</text><rect x="553.3" y="161.85" width="303.7" height="1" fill="#e8e9ec"/><text x="546.5" y="163.95" text-anchor="end" font-size="7.8" fill="#444">25</text><rect x="553.3" y="131.40" width="303.7" height="1" fill="#e8e9ec"/><text x="546.5" y="133.50" text-anchor="end" font-size="7.8" fill="#444">30</text><rect x="553" y="315" width="0.8" height="4" fill="#d5d7db"/><rect x="857" y="315" width="0.8" height="4" fill="#d5d7db"/><text x="553" y="332.7" text-anchor="middle" font-size="8.4" fill="#333">06/27/2025</text><text x="705" y="332.7" text-anchor="middle" font-size="8.4" fill="#333">07/04/2025</text><text x="857" y="332.7" text-anchor="middle" font-size="8.4" fill="#333">07/06/2025</text><path d="M553.00,296.33 C629.00,296.33 629.00,314.60 705.00,314.60 C781.00,314.60 781.00,302.42 857.00,302.42" stroke="#ecc94b" stroke-width="3.6" fill="none"/><path d="M553.00,235.43 C629.00,235.43 629.00,168.44 705.00,168.44 C781.00,168.44 781.00,296.33 857.00,296.33" stroke="#e87474" stroke-width="3.6" fill="none"/><path d="M553.00,211.07 C629.00,211.07 629.00,131.90 705.00,131.90 C781.00,131.90 781.00,253.70 857.00,253.70" stroke="#5bbf7f" stroke-width="3.6" fill="none"/><rect x="548.00" y="289.93" width="10" height="10" fill="#ecc94b"/><text x="553" y="298.13" text-anchor="middle" font-size="8.6" font-weight="700" fill="#fff">3</text><rect x="700.00" y="308.20" width="10" height="10" fill="#ecc94b"/><text x="705" y="316.40" text-anchor="middle" font-size="8.6" font-weight="700" fill="#fff">0</text><rect x="852.00" y="296.02" width="10" height="10" fill="#ecc94b"/><text x="857" y="304.22" text-anchor="middle" font-size="8.6" font-weight="700" fill="#fff">2</text><rect x="545.80" y="229.03" width="14.4" height="10" fill="#e87474"/><text x="553" y="237.23" text-anchor="middle" font-size="8.6" font-weight="700" fill="#fff">13</text><rect x="697.80" y="162.04" width="14.4" height="10" fill="#e87474"/><text x="705" y="170.24" text-anchor="middle" font-size="8.6" font-weight="700" fill="#fff">24</text><rect x="852.00" y="289.93" width="10" height="10" fill="#e87474"/><text x="857" y="298.13" text-anchor="middle" font-size="8.6" font-weight="700" fill="#fff">3</text><rect x="545.80" y="204.67" width="14.4" height="10" fill="#5bbf7f"/><text x="553" y="212.87" text-anchor="middle" font-size="8.6" font-weight="700" fill="#fff">17</text><rect x="697.80" y="125.50" width="14.4" height="10" fill="#5bbf7f"/><text x="705" y="133.70" text-anchor="middle" font-size="8.6" font-weight="700" fill="#fff">30</text><rect x="849.80" y="247.30" width="14.4" height="10" fill="#5bbf7f"/><text x="857" y="255.50" text-anchor="middle" font-size="8.6" font-weight="700" fill="#fff">10</text></svg>
<div style="position:absolute;left:897.8px;top:89.7px;width:359.5px;height:41.5px;background:#f3f6fd;"></div>
<div style="position:absolute;left:897.8px;top:174.2px;width:359.5px;height:27.5px;background:#f3f6fd;"></div>
<div style="position:absolute;top:96.61px;font-size:10.5px;line-height:10.5px;color:#6b7280;font-weight:400;white-space:nowrap;left:908.75px;">Status</div>
<div style="position:absolute;top:139.11px;font-size:10.5px;line-height:10.5px;color:#6b7280;font-weight:400;white-space:nowrap;left:908.75px;">Tests</div>
<div style="position:absolute;top:181.91px;font-size:10.5px;line-height:10.5px;color:#6b7280;font-weight:400;white-space:nowrap;left:908.75px;">Updated</div>
<div style="position:absolute;top:209.11px;font-size:10.5px;line-height:10.5px;color:#6b7280;font-weight:400;white-space:nowrap;left:908.75px;">Runs</div>
<svg style="position:absolute;left:1025.5px;top:101.2px;" width="8" height="8" viewBox="0 0 8 8"><circle cx="4" cy="4" r="3.8" fill="#ef4444"/></svg>
<div style="position:absolute;left:1036px;top:99.80px;font-size:10.4px;line-height:10.4px;white-space:nowrap;color:#6b7280;"><b style="color:#ef4444;font-size:10.4px;letter-spacing:-0.5px;">FAILED</b> based on <b style="color:#4b5563">3</b> runs with <b style="color:#4b5563">realistic</b></div>
<div style="position:absolute;top:115.11px;font-size:10.5px;line-height:10.5px;color:#6b7280;font-weight:400;white-space:nowrap;left:1025.00px;">strategy</div>
<div style="position:absolute;left:1025px;top:142.70px;font-size:10.4px;line-height:10.4px;white-space:nowrap;color:#111827;"><b>69</b> :</div>
<svg style="position:absolute;left:1052px;top:142px;" width="9.2" height="9.2" viewBox="0 0 9.2 9.2"><circle cx="4.6" cy="4.6" r="4.6" fill="#10b981"/><path d="M2.4 4.8 L4 6.3 L6.9 3.3" stroke="#fff" stroke-width="1.3" fill="none"/></svg>
<div style="position:absolute;left:1065px;top:142.70px;font-size:10.4px;line-height:10.4px;white-space:nowrap;color:#10b981;"><b>40</b> passed</div>
<svg style="position:absolute;left:1131.9px;top:142px;" width="9.2" height="9.2" viewBox="0 0 9.2 9.2"><circle cx="4.6" cy="4.6" r="4.6" fill="#ef4444"/><rect x="2.3" y="3.9" width="4.6" height="1.4" fill="#fff"/></svg>
<div style="position:absolute;left:1144.5px;top:142.70px;font-size:10.4px;line-height:10.4px;white-space:nowrap;color:#ef4444;"><b>27</b> failed</div>
<svg style="position:absolute;left:1201.9px;top:142px;" width="9" height="9" viewBox="0 0 9 9"><circle cx="4.5" cy="4.5" r="2.95" stroke="#f59e0b" stroke-width="2.9" fill="none"/></svg>
<div style="position:absolute;top:142.50px;font-size:10.4px;line-height:10.4px;color:#f59e0b;font-weight:700;white-space:nowrap;left:1214.70px;">2</div>
<div style="position:absolute;top:157.20px;font-size:10.4px;line-height:10.4px;color:#f59e0b;font-weight:400;white-space:nowrap;left:1025.00px;">skipped</div>
<div style="position:absolute;top:184.68px;font-size:10.3px;line-height:10.3px;color:#374151;font-weight:400;white-space:nowrap;left:1025.00px;">7 days ago</div>
<div style="position:absolute;top:213.70px;font-size:10.4px;line-height:10.4px;color:#374151;font-weight:400;white-space:nowrap;left:1025.00px;">3 runs</div>
<div style="position:absolute;left:1144.3px;top:351.4px;width:100px;height:19.7px;background:#fafafa;border:1px solid #eef0f2;border-radius:8px;box-sizing:border-box;"></div>
<svg style="position:absolute;left:1152.9px;top:357.5px;" width="8.5" height="8" viewBox="0 0 8.5 8"><rect x="0" y="0" width="1.8" height="1.6" fill="#374151"/><rect x="2.6" y="0" width="5.9" height="1.6" fill="#374151"/><rect x="0" y="2.2" width="1.8" height="1.6" fill="#374151"/><rect x="2.6" y="2.2" width="5.9" height="1.6" fill="#374151"/><rect x="0" y="4.4" width="1.8" height="1.6" fill="#374151"/><rect x="2.6" y="4.4" width="5.9" height="1.6" fill="#374151"/><rect x="0" y="6.6" width="1.8" height="1.4" fill="#374151"/><rect x="2.6" y="6.6" width="5.9" height="1.4" fill="#374151"/></svg>
<div style="position:absolute;top:356.24px;font-size:10.7px;line-height:10.7px;color:#374151;font-weight:400;white-space:nowrap;left:1167.70px;">Default view</div>
<div style="position:absolute;left:1232px;top:347.3px;width:33.75px;height:27px;background:#fff;border:2px solid #ef2d45;box-sizing:border-box;"></div>
<svg style="position:absolute;left:1242px;top:356.5px;" width="11" height="10" viewBox="0 0 11 10"><path d="M0.5 2.5 H5.8 M9.2 2.5 H10.5 M0.5 7.5 H1.8 M5.2 7.5 H10.5" stroke="#374151" stroke-width="1"/><circle cx="7.5" cy="2.5" r="1.7" stroke="#374151" stroke-width="1" fill="none"/><circle cx="3.5" cy="7.5" r="1.7" stroke="#374151" stroke-width="1" fill="none"/></svg>
<div style="position:absolute;left:1257.8px;top:365.7px;width:16.2px;height:16.2px;background:#ef2d45;border-radius:50%;border:1px solid #fff;box-sizing:border-box;"></div>
<div style="position:absolute;top:368.61px;font-size:10.5px;line-height:10.5px;color:#fff;font-weight:700;white-space:nowrap;left:1065.90px;width:400px;text-align:center;">4</div>
<div style="position:absolute;left:526px;top:376.6px;width:731px;height:113.2px;background:#fff;border:1px solid #eef0f3;border-radius:6px;box-sizing:border-box;"></div>
<div style="position:absolute;left:526px;top:408px;width:731px;height:1px;background:#f0f1f4;"></div>
<div style="position:absolute;left:527px;top:435px;width:729px;height:27px;background:#fafbfd;"></div>
<div style="position:absolute;left:558.4px;top:377.5px;width:2px;height:30.5px;background:#e5e7eb;"></div>
<div style="position:absolute;left:699px;top:377.5px;width:2px;height:30.5px;background:#e5e7eb;"></div>
<div style="position:absolute;left:769px;top:377.5px;width:2px;height:30.5px;background:#e5e7eb;"></div>
<div style="position:absolute;left:839.5px;top:377.5px;width:2px;height:30.5px;background:#e5e7eb;"></div>
<div style="position:absolute;left:909.75px;top:377.5px;width:2px;height:30.5px;background:#e5e7eb;"></div>
<div style="position:absolute;left:1001px;top:377.5px;width:2px;height:30.5px;background:#e5e7eb;"></div>
<div style="position:absolute;left:1106.5px;top:377.5px;width:2px;height:30.5px;background:#e5e7eb;"></div>
<div style="position:absolute;left:1177px;top:377.5px;width:2px;height:30.5px;background:#e5e7eb;"></div>
<div style="position:absolute;left:1247px;top:377.5px;width:2px;height:30.5px;background:#e5e7eb;"></div>
<div style="position:absolute;top:387.79px;font-size:10.0px;line-height:10.0px;color:#374151;font-weight:700;white-space:nowrap;left:343.65px;width:400px;text-align:center;">Title</div>
<div style="position:absolute;top:387.79px;font-size:10.0px;line-height:10.0px;color:#374151;font-weight:700;white-space:nowrap;left:431.20px;width:400px;text-align:center;">Plan</div>
<div style="position:absolute;top:387.79px;font-size:10.0px;line-height:10.0px;color:#374151;font-weight:700;white-space:nowrap;left:536.50px;width:400px;text-align:center;">Labels</div>
<div style="position:absolute;top:387.79px;font-size:10.0px;line-height:10.0px;color:#374151;font-weight:700;white-space:nowrap;left:606.90px;width:400px;text-align:center;">Tags &amp; Envs</div>
<div style="position:absolute;top:387.79px;font-size:10.0px;line-height:10.0px;color:#374151;font-weight:700;white-space:nowrap;left:677.25px;width:400px;text-align:center;">Tests Count</div>
<div style="position:absolute;top:387.79px;font-size:10.0px;line-height:10.0px;color:#374151;font-weight:700;white-space:nowrap;left:757.90px;width:400px;text-align:center;">Defects Count</div>
<div style="position:absolute;top:387.79px;font-size:10.0px;line-height:10.0px;color:#374151;font-weight:700;white-space:nowrap;left:856.40px;width:400px;text-align:center;">Status</div>
<div style="position:absolute;top:387.79px;font-size:10.0px;line-height:10.0px;color:#374151;font-weight:700;white-space:nowrap;left:944.20px;width:400px;text-align:center;">Assigned To</div>
<div style="position:absolute;top:387.79px;font-size:10.0px;line-height:10.0px;color:#374151;font-weight:700;white-space:nowrap;left:1014.25px;width:400px;text-align:center;">Finished At</div>
<svg style="position:absolute;left:530.2px;top:417.45px;" width="9" height="9" viewBox="0 0 9 9"><circle cx="4.25" cy="4.25" r="4.25" fill="#ef3340"/><rect x="2" y="3.6" width="4.5" height="1.4" fill="#fff"/></svg>
<svg style="position:absolute;left:544.2px;top:414.7px;" width="14" height="14" viewBox="0 0 14 14"><rect x="0" y="0" width="14" height="14" rx="4" fill="#fdf0c4"/><g fill="#c2570c"><rect x="6.7" y="2" width="1.3" height="2.2" rx="0.6"/><rect x="3.3" y="2.8" width="1.3" height="2.2" rx="0.6" transform="rotate(-40 4 3.9)"/><rect x="10" y="2.8" width="1.3" height="2.2" rx="0.6" transform="rotate(40 10.6 3.9)"/><rect x="2" y="6.1" width="2.2" height="1.3" rx="0.6"/><rect x="3.3" y="8.6" width="1.3" height="2.2" rx="0.6" transform="rotate(40 4 9.7)"/><path d="M7 7 L12 9 L10.2 9.8 L12.3 11.9 L11.4 12.8 L9.3 10.7 L8.5 12.5 Z"/></g></svg>
<div style="position:absolute;top:417.74px;font-size:8.7px;line-height:8.7px;color:#1f2937;font-weight:400;white-space:nowrap;left:431.30px;width:400px;text-align:center;">plan 123</div>
<div style="position:absolute;top:417.90px;font-size:8.5px;line-height:8.5px;color:#6b7280;font-weight:400;white-space:nowrap;left:677.25px;width:400px;text-align:center;">15 tests</div>
<div style="position:absolute;left:1007px;top:416.09999999999997px;width:28px;height:11.25px;background:#a7f0cd;border-radius:6px;"></div>
<div style="position:absolute;top:417.52px;font-size:8.6px;line-height:8.6px;color:#15803d;font-weight:700;white-space:nowrap;left:821.00px;width:400px;text-align:center;">10</div>
<div style="position:absolute;left:1038px;top:416.09999999999997px;width:28px;height:11.25px;background:#fdcaca;border-radius:6px;"></div>
<div style="position:absolute;top:417.52px;font-size:8.6px;line-height:8.6px;color:#e02d2d;font-weight:700;white-space:nowrap;left:852.00px;width:400px;text-align:center;">3</div>
<div style="position:absolute;left:1069px;top:416.09999999999997px;width:28px;height:11.25px;background:#fde68a;border-radius:6px;"></div>
<div style="position:absolute;top:417.52px;font-size:8.6px;line-height:8.6px;color:#f08c0b;font-weight:700;white-space:nowrap;left:883.00px;width:400px;text-align:center;">2</div>
<svg style="position:absolute;left:1136.8px;top:414.4px;" width="14.6" height="14.6" viewBox="0 0 25 25"><circle cx="12.6" cy="12.6" r="11.2" fill="#fff" stroke="#111" stroke-width="1.8"/><path d="M6.4 6.75 H14.9 V20.5 H11.2 V9.7 H6.4 Z" fill="#111"/><rect x="15.4" y="6.6" width="1.6" height="6.8" fill="#4f8cf7"/><rect x="17.8" y="7" width="1.2" height="3.5" fill="#111"/></svg>
<div style="position:absolute;left:1182.7px;top:408.30px;width:66px;height:27px;overflow:hidden;"><div style="position:absolute;top:9.27px;font-size:8.9px;line-height:8.9px;color:#6b7280;font-weight:400;white-space:nowrap;left:0.00px;">Jul 6, 2025 7:40</div></div>
<div style="position:absolute;left:1252.5px;top:412.7px;width:8px;height:18px;border:1px solid #e5e7eb;border-right:none;border-radius:5px 0 0 5px;box-sizing:border-box;background:#fff;"></div>
<svg style="position:absolute;left:530.2px;top:444.34999999999997px;" width="9" height="9" viewBox="0 0 9 9"><circle cx="4.25" cy="4.25" r="4.25" fill="#ef3340"/><rect x="2" y="3.6" width="4.5" height="1.4" fill="#fff"/></svg>
<svg style="position:absolute;left:544.2px;top:441.59999999999997px;" width="14" height="14" viewBox="0 0 14 14"><rect x="0" y="0" width="14" height="14" rx="4" fill="#f3eefe"/><path d="M11.4 6.2 A4.6 4.6 0 1 0 6.6 11.4" stroke="#7e22ce" stroke-width="1.3" fill="none"/><path d="M8.9 6.4 A2.3 2.3 0 1 0 6.4 8.9" stroke="#7e22ce" stroke-width="1.3" fill="none"/><path d="M7.2 7.2 L12.2 8.8 L10.3 9.8 L12.4 11.9 L11.7 12.6 L9.6 10.5 L8.8 12.3 Z" fill="#6d28d9"/></svg>
<div style="position:absolute;top:444.64px;font-size:8.7px;line-height:8.7px;color:#1f2937;font-weight:400;white-space:nowrap;left:431.30px;width:400px;text-align:center;">small plan</div>
<div style="position:absolute;left:775px;top:440.2px;width:39.3px;height:13.5px;background:#e9ebef;border-radius:7px;"></div>
<svg style="position:absolute;left:780.5px;top:441.9px;" width="10.5" height="10.5" viewBox="0 0 20 20"><rect x="7.8" y="0.5" width="4.4" height="5" rx="0.8" fill="#6b7280" transform="rotate(0 10 10)"/><rect x="7.8" y="0.5" width="4.4" height="5" rx="0.8" fill="#6b7280" transform="rotate(45 10 10)"/><rect x="7.8" y="0.5" width="4.4" height="5" rx="0.8" fill="#6b7280" transform="rotate(90 10 10)"/><rect x="7.8" y="0.5" width="4.4" height="5" rx="0.8" fill="#6b7280" transform="rotate(135 10 10)"/><rect x="7.8" y="0.5" width="4.4" height="5" rx="0.8" fill="#6b7280" transform="rotate(180 10 10)"/><rect x="7.8" y="0.5" width="4.4" height="5" rx="0.8" fill="#6b7280" transform="rotate(225 10 10)"/><rect x="7.8" y="0.5" width="4.4" height="5" rx="0.8" fill="#6b7280" transform="rotate(270 10 10)"/><rect x="7.8" y="0.5" width="4.4" height="5" rx="0.8" fill="#6b7280" transform="rotate(315 10 10)"/><circle cx="10" cy="10" r="6.8" fill="#6b7280"/><circle cx="10" cy="10" r="2.6" fill="#e9ebef"/></svg>
<div style="position:absolute;top:444.14px;font-size:8.7px;line-height:8.7px;color:#6b7280;font-weight:400;white-space:nowrap;left:794.00px;">test</div>
<div style="position:absolute;top:444.80px;font-size:8.5px;line-height:8.5px;color:#6b7280;font-weight:400;white-space:nowrap;left:677.25px;width:400px;text-align:center;">54 tests</div>
<div style="position:absolute;left:1007px;top:442.99999999999994px;width:28px;height:11.25px;background:#a7f0cd;border-radius:6px;"></div>
<div style="position:absolute;top:444.42px;font-size:8.6px;line-height:8.6px;color:#15803d;font-weight:700;white-space:nowrap;left:821.00px;width:400px;text-align:center;">30</div>
<div style="position:absolute;left:1038px;top:442.99999999999994px;width:28px;height:11.25px;background:#fdcaca;border-radius:6px;"></div>
<div style="position:absolute;top:444.42px;font-size:8.6px;line-height:8.6px;color:#e02d2d;font-weight:700;white-space:nowrap;left:852.00px;width:400px;text-align:center;">24</div>
<div style="position:absolute;left:1069px;top:442.99999999999994px;width:28px;height:11.25px;background:#fdf6dc;border-radius:6px;"></div>
<div style="position:absolute;top:444.42px;font-size:8.6px;line-height:8.6px;color:#f6e3b0;font-weight:700;white-space:nowrap;left:883.00px;width:400px;text-align:center;">0</div>
<div style="position:absolute;left:1182.7px;top:435.20px;width:66px;height:27px;overflow:hidden;"><div style="position:absolute;top:9.27px;font-size:8.9px;line-height:8.9px;color:#6b7280;font-weight:400;white-space:nowrap;left:0.00px;">Jul 4, 2025 11:27</div></div>
<div style="position:absolute;left:1252.5px;top:439.59999999999997px;width:8px;height:18px;border:1px solid #e5e7eb;border-right:none;border-radius:5px 0 0 5px;box-sizing:border-box;background:#fff;"></div>
<svg style="position:absolute;left:530.2px;top:471.25px;" width="9" height="9" viewBox="0 0 9 9"><circle cx="4.25" cy="4.25" r="4.25" fill="#ef3340"/><rect x="2" y="3.6" width="4.5" height="1.4" fill="#fff"/></svg>
<svg style="position:absolute;left:544.2px;top:468.5px;" width="14" height="14" viewBox="0 0 14 14"><rect x="0" y="0" width="14" height="14" rx="4" fill="#e3effc"/><path d="M1.8 4.8 H6" stroke="#1e5fa8" stroke-width="1.5"/><path d="M5.2 2.6 L8.2 4.8 L5.2 7 Z" fill="#1e5fa8"/><path d="M8 2.6 A4.8 4.8 0 0 1 11.5 6.2" stroke="#1e5fa8" stroke-width="1.4" fill="none"/><path d="M12.3 9.4 H8" stroke="#1e5fa8" stroke-width="1.5"/><path d="M8.8 7.2 L5.8 9.4 L8.8 11.6 Z" fill="#1e5fa8"/><path d="M6.2 11.6 A4.8 4.8 0 0 1 2.5 7.8" stroke="#1e5fa8" stroke-width="1.4" fill="none"/></svg>
<div style="position:absolute;top:471.54px;font-size:8.7px;line-height:8.7px;color:#1f2937;font-weight:400;white-space:nowrap;left:431.30px;width:400px;text-align:center;">Mixed plan</div>
<div style="position:absolute;left:775px;top:467.1px;width:39.3px;height:13.5px;background:#e9ebef;border-radius:7px;"></div>
<svg style="position:absolute;left:780.5px;top:468.8px;" width="10.5" height="10.5" viewBox="0 0 20 20"><rect x="7.8" y="0.5" width="4.4" height="5" rx="0.8" fill="#6b7280" transform="rotate(0 10 10)"/><rect x="7.8" y="0.5" width="4.4" height="5" rx="0.8" fill="#6b7280" transform="rotate(45 10 10)"/><rect x="7.8" y="0.5" width="4.4" height="5" rx="0.8" fill="#6b7280" transform="rotate(90 10 10)"/><rect x="7.8" y="0.5" width="4.4" height="5" rx="0.8" fill="#6b7280" transform="rotate(135 10 10)"/><rect x="7.8" y="0.5" width="4.4" height="5" rx="0.8" fill="#6b7280" transform="rotate(180 10 10)"/><rect x="7.8" y="0.5" width="4.4" height="5" rx="0.8" fill="#6b7280" transform="rotate(225 10 10)"/><rect x="7.8" y="0.5" width="4.4" height="5" rx="0.8" fill="#6b7280" transform="rotate(270 10 10)"/><rect x="7.8" y="0.5" width="4.4" height="5" rx="0.8" fill="#6b7280" transform="rotate(315 10 10)"/><circle cx="10" cy="10" r="6.8" fill="#6b7280"/><circle cx="10" cy="10" r="2.6" fill="#e9ebef"/></svg>
<div style="position:absolute;top:471.04px;font-size:8.7px;line-height:8.7px;color:#6b7280;font-weight:400;white-space:nowrap;left:794.00px;">test</div>
<div style="position:absolute;top:471.70px;font-size:8.5px;line-height:8.5px;color:#6b7280;font-weight:400;white-space:nowrap;left:677.25px;width:400px;text-align:center;">33 tests</div>
<div style="position:absolute;left:1007px;top:469.9px;width:28px;height:11.25px;background:#a7f0cd;border-radius:6px;"></div>
<div style="position:absolute;top:471.32px;font-size:8.6px;line-height:8.6px;color:#15803d;font-weight:700;white-space:nowrap;left:821.00px;width:400px;text-align:center;">17</div>
<div style="position:absolute;left:1038px;top:469.9px;width:28px;height:11.25px;background:#fdcaca;border-radius:6px;"></div>
<div style="position:absolute;top:471.32px;font-size:8.6px;line-height:8.6px;color:#e02d2d;font-weight:700;white-space:nowrap;left:852.00px;width:400px;text-align:center;">13</div>
<div style="position:absolute;left:1069px;top:469.9px;width:28px;height:11.25px;background:#fde68a;border-radius:6px;"></div>
<div style="position:absolute;top:471.32px;font-size:8.6px;line-height:8.6px;color:#f08c0b;font-weight:700;white-space:nowrap;left:883.00px;width:400px;text-align:center;">3</div>
<svg style="position:absolute;left:1136.8px;top:468.2px;" width="14.6" height="14.6" viewBox="0 0 25 25"><circle cx="12.6" cy="12.6" r="12.1" fill="#111"/><path d="M6.4 6.75 H14.9 V20.5 H11.2 V9.7 H6.4 Z" fill="#fff"/><rect x="15.4" y="6.6" width="1.6" height="6.8" fill="#4f8cf7"/><rect x="17.8" y="7" width="1.2" height="3.5" fill="#fff"/></svg>
<div style="position:absolute;left:1182.7px;top:462.10px;width:66px;height:27px;overflow:hidden;"><div style="position:absolute;top:9.27px;font-size:8.9px;line-height:8.9px;color:#6b7280;font-weight:400;white-space:nowrap;left:0.00px;">Jun 27, 2025 5:5</div></div>
<div style="position:absolute;left:1252.5px;top:466.5px;width:8px;height:18px;border:1px solid #e5e7eb;border-right:none;border-radius:5px 0 0 5px;box-sizing:border-box;background:#fff;"></div>
</body></html>
